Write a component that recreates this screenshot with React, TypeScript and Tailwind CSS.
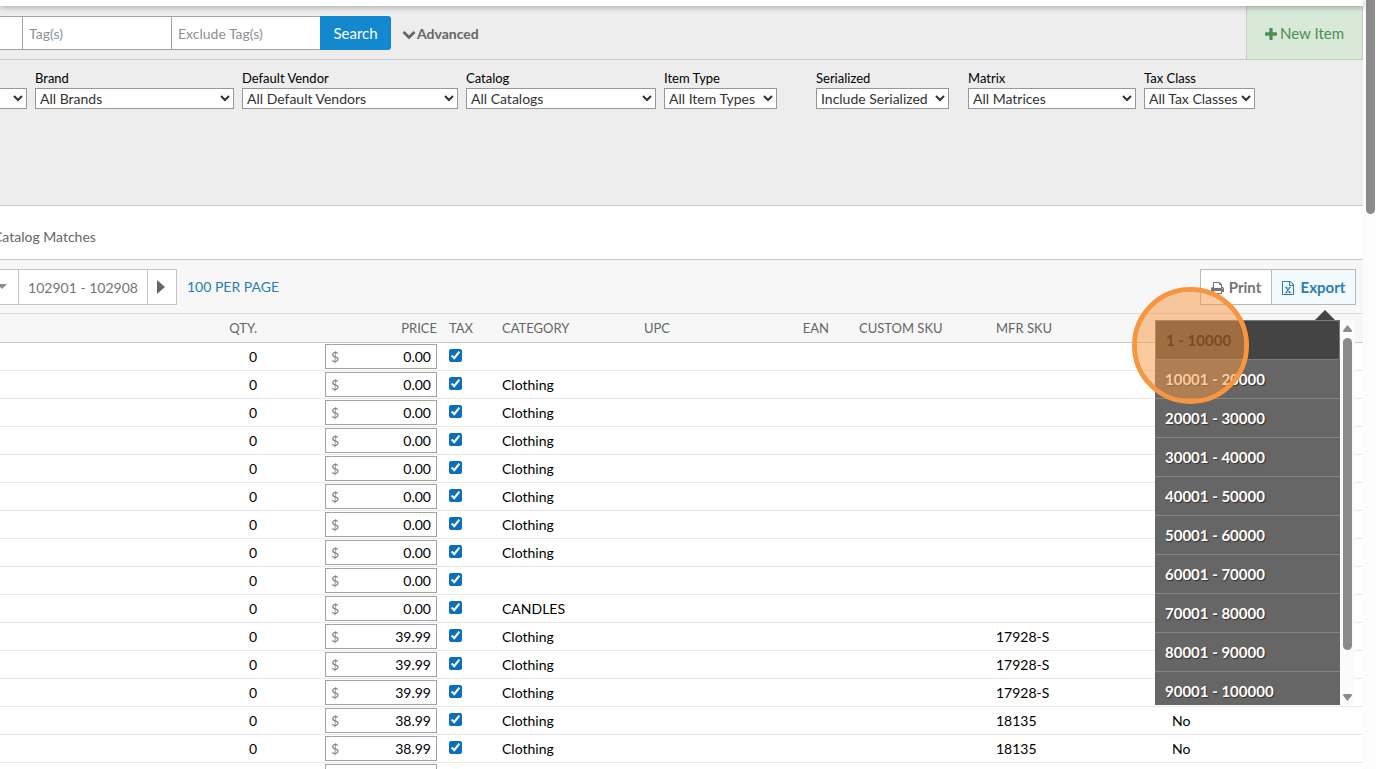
import { useState } from "react";

type Filter = { id: string; label: string; value: string; className: string };
type Item = { price: string; category: string; mfrSku: string; archived: string };

const filters: Filter[] = [
  { id: "brand", label: "Brand", value: "All Brands", className: "w-[199px] mr-2" },
  { id: "vendor", label: "Default Vendor", value: "All Default Vendors", className: "w-[216px] mr-2" },
  { id: "catalog", label: "Catalog", value: "All Catalogs", className: "w-[190px] mr-2" },
  { id: "type", label: "Item Type", value: "All Item Types", className: "w-[113px] mr-[39px]" },
  { id: "serialized", label: "Serialized", value: "Include Serialized", className: "w-[133px] mr-[19px]" },
  { id: "matrix", label: "Matrix", value: "All Matrices", className: "w-[168px] mr-2" },
  { id: "tax", label: "Tax Class", value: "All Tax Classes", className: "w-[111px]" },
];

const items: Item[] = [
  { price: "0.00", category: "", mfrSku: "", archived: "" },
  { price: "0.00", category: "Clothing", mfrSku: "", archived: "" },
  { price: "0.00", category: "Clothing", mfrSku: "", archived: "" },
  { price: "0.00", category: "Clothing", mfrSku: "", archived: "" },
  { price: "0.00", category: "Clothing", mfrSku: "", archived: "" },
  { price: "0.00", category: "Clothing", mfrSku: "", archived: "" },
  { price: "0.00", category: "Clothing", mfrSku: "", archived: "" },
  { price: "0.00", category: "Clothing", mfrSku: "", archived: "" },
  { price: "0.00", category: "", mfrSku: "", archived: "" },
  { price: "0.00", category: "CANDLES", mfrSku: "", archived: "" },
  { price: "39.99", category: "Clothing", mfrSku: "17928-S", archived: "" },
  { price: "39.99", category: "Clothing", mfrSku: "17928-S", archived: "" },
  { price: "39.99", category: "Clothing", mfrSku: "17928-S", archived: "" },
  { price: "38.99", category: "Clothing", mfrSku: "18135", archived: "No" },
  { price: "38.99", category: "Clothing", mfrSku: "18135", archived: "No" },
  { price: "38.99", category: "Clothing", mfrSku: "18135", archived: "No" },
];

const exportRanges = [
  "1 - 10000",
  "10001 - 20000",
  "20001 - 30000",
  "30001 - 40000",
  "40001 - 50000",
  "50001 - 60000",
  "60001 - 70000",
  "70001 - 80000",
  "80001 - 90000",
  "90001 - 100000",
];

function ChevronIcon() {
  return (
    <svg viewBox="0 0 1792 1792" className="w-[14px] h-[14px]" fill="currentColor" aria-hidden="true">
      <path d="M1683 808l-742 741q-19 19-45 19t-45-19l-742-741q-19-19-19-45.5t19-45.500l166-165q19-19 45-19t45 19l531 531 531-531q19-19 45-19t45 19l166 165q19 19 19 45.500t-19 45.500z" />
    </svg>
  );
}

function PlusIcon() {
  return (
    <svg viewBox="0 128 1408 1408" className="w-3 h-3" fill="currentColor" aria-hidden="true">
      <path d="M1408 736v192q0 40-28 68t-68 28h-416v416q0 40-28 68t-68 28h-192q-40 0-68-28t-28-68v-416h-416q-40 0-68-28t-28-68v-192q0-40 28-68t68-28h416v-416q0-40 28-68t68-28h192q40 0 68 28t28 68v416h416q40 0 68 28t28 68z" />
    </svg>
  );
}

function PrintIcon() {
  return (
    <svg viewBox="0 0 1664 1792" className="w-[13px] h-[14px]" fill="currentColor" aria-hidden="true">
      <path d="M384 1536h896v-256h-896v256zM384 896h896v-384h-160q-40 0-68-28t-28-68v-160h-640v640zM1536 960q0-26-19-45t-45-19-45 19-19 45 19 45 45 19 45-19 19-45zM1664 960v416q0 13-9.500 22.500t-22.500 9.500h-224v160q0 40-28 68t-68 28h-960q-40 0-68-28t-28-68v-160h-224q-13 0-22.500-9.500t-9.500-22.500v-416q0-79 56.500-135.500t135.500-56.500h64v-544q0-40 28-68t68-28h672q40 0 88 20t76 48l152 152q28 28 48 76t20 88v256h64q79 0 135.500 56.500t56.500 135.500z" />
    </svg>
  );
}

function ExcelIcon() {
  return (
    <svg viewBox="0 0 1536 1792" className="w-3 h-[14px]" fill="currentColor" aria-hidden="true">
      <path d="M1468 380q28 28 48 76t20 88v1152q0 40-28 68t-68 28h-1344q-40 0-68-28t-28-68v-1600q0-40 28-68t68-28h896q40 0 88 20t76 48zM1024 136v376h376q-10-29-22-41l-313-313q-12-12-41-22zM1408 1664v-1024h-416q-40 0-68-28t-28-68v-416h-768v1536h1280z" />
      <path
        d="M520 840L1010 1470M1010 840L520 1470M420 820h270M860 820h250M420 1490h260M850 1490h270"
        fill="none"
        stroke="currentColor"
        strokeWidth="150"
      />
    </svg>
  );
}

function ExportMenu() {
  return (
    <div className="absolute top-[50px] right-0 z-10 w-[200px] h-[385px] flex">
      <svg viewBox="0 0 20 10" className="absolute -top-[10px] left-[160px] w-5 h-[10px]" aria-hidden="true">
        <path d="M0 10L10 0L20 10Z" fill="#444444" />
      </svg>
      <div className="w-[185px] h-full overflow-hidden bg-[#666666]">
        {exportRanges.map((range, i) => (
          <button
            key={range}
            type="button"
            className={
              i === 0
                ? "block w-full h-10 pt-[2px] pl-[10px] text-left text-[15px] font-bold text-black bg-[#444444] border border-[#7c7c7c] rounded-[3px]"
                : "block w-full h-[39px] pt-[2px] pl-[10px] text-left text-[15px] font-bold text-white border-b border-[#858585] [text-shadow:1px_1px_1px_#333333]"
            }
          >
            {range}
          </button>
        ))}
      </div>
      <div className="flex-1 flex flex-col items-center bg-[#fbfbfb] pt-[5px] pb-1">
        <svg viewBox="0 0 9 7" className="w-[9px] h-[7px]" fill="#8b8b8b" aria-hidden="true">
          <path d="M4.500 0L9 5.500Q9 7 8 7H1Q0 7 0 5.500Z" />
        </svg>
        <div className="w-[9px] h-[312px] mt-[6px] mb-auto rounded-full bg-[#8b8b8b]" />
        <svg viewBox="0 0 9 7" className="w-[9px] h-[7px]" fill="#8b8b8b" aria-hidden="true">
          <path d="M4.500 7L9 1.500Q9 0 8 0H1Q0 0 0 1.500Z" />
        </svg>
      </div>
      <div className="absolute -top-[33px] -left-[23px] w-[117px] h-[117px] rounded-full border-5 border-[#f79540] bg-[#f79540]/50 bg-clip-padding pointer-events-none" />
    </div>
  );
}

export default function App() {
  const [taxed, setTaxed] = useState<boolean[]>(items.map(() => true));

  function toggleTax(index: number) {
    setTaxed(taxed.map((t, i) => (i === index ? !t : t)));
  }

  return (
    <div className="flex h-screen overflow-hidden bg-white font-[Lato,sans-serif] text-sm text-black">
      <main className="flex-1 min-w-0">
        <div className="relative h-[6px] bg-white shadow-[0_1px_6px_rgba(0,0,0,0.35)]" />

        <form
          className="flex items-center h-[54px] bg-[#ededed] border-b border-[#c8c8c8]"
          onSubmit={(e) => e.preventDefault()}
        >
          <input
            type="text"
            aria-label="Search items"
            className="w-[22px] h-[34px] bg-white border-y border-[#a3a3a3]"
          />
          <input
            type="text"
            aria-label="Tags"
            placeholder="Tag(s)"
            className="w-[150px] h-[34px] px-[6px] pt-[2px] bg-white border border-[#a3a3a3] placeholder:text-[#8c9196]"
          />
          <input
            type="text"
            aria-label="Exclude tags"
            placeholder="Exclude Tag(s)"
            className="w-[149px] h-[34px] px-[6px] pt-[2px] bg-white border-y border-[#a3a3a3] placeholder:text-[#8c9196]"
          />
          <button
            type="submit"
            className="w-[71px] h-[34px] -ml-px pt-[2px] rounded-r-[3px] bg-[#1388cf] text-[15px] text-white"
          >
            Search
          </button>
          <button type="button" className="flex items-center gap-px ml-[11px] pt-[2px] font-bold text-[#666666]">
            <ChevronIcon />
            Advanced
          </button>
          <button
            type="button"
            className="flex items-center justify-center gap-[3px] w-[117px] h-full ml-auto pt-[2px] border-x border-[#c3cfc3] bg-[#d8ead7] text-[15px] text-[#4a8f54]"
          >
            <PlusIcon />
            New Item
          </button>
        </form>

        <div className="flex items-start h-[146px] pt-2 bg-[#ededed] border-b border-[#c8c8c8]">
          <select
            aria-label="Category"
            className="w-[27px] h-[21px] mt-5 mr-2 bg-white border border-l-0 border-[#979797] text-[#333333]"
          />
          {filters.map((f) => (
            <div key={f.id} className={f.className}>
              <label htmlFor={f.id} className="block h-5 leading-5 text-[13px]">
                {f.label}
              </label>
              <select
                id={f.id}
                className="block w-full h-[21px] bg-white border border-[#979797] text-sm text-[#333333]"
              >
                <option>{f.value}</option>
              </select>
            </div>
          ))}
        </div>

        <div className="flex items-center h-[54px] pt-2 border-b border-[#c8c8c8]">
          <a href="#catalog" className="-ml-[7px] text-[#666666]">
            Catalog Matches
          </a>
        </div>

        <div className="flex items-center h-[54px] pr-[7px] bg-[#f7f7f7] border-b border-[#dddddd]">
          <div className="flex h-9 border border-l-0 border-[#c5c5c5] bg-white text-[#757575]">
            <button type="button" aria-label="Jump to page" className="w-[18px]">
              <svg viewBox="0 0 10 5" className="w-[10px] h-[5px] -ml-[3px]" fill="#8c8c8c" aria-hidden="true">
                <path d="M0 0H10L5 5Z" />
              </svg>
            </button>
            <span className="w-[130px] border-x border-[#c5c5c5] text-center leading-9">
              102901 - 102908
            </span>
            <button type="button" aria-label="Next page" className="flex items-center w-7 pl-[9px]">
              <svg viewBox="0 0 8 14" className="w-2 h-[14px]" fill="#666666" aria-hidden="true">
                <path d="M0 0L8 7L0 14Z" />
              </svg>
            </button>
          </div>
          <button type="button" className="ml-[10px] text-[#2a7db8]">
            100 PER PAGE
          </button>
          <div className="relative flex h-9 ml-auto border border-[#b9b9b9] bg-white font-bold text-[15px]">
            <button
              type="button"
              className="flex items-center justify-center gap-[5px] w-[70px] pt-[2px] text-[#757575]"
            >
              <PrintIcon />
              Print
            </button>
            <button
              type="button"
              className="flex items-center justify-center gap-[7px] w-[84px] pt-[2px] border-l border-[#b9b9b9] bg-[#f3fafe] text-[#2a7db8]"
            >
              <ExcelIcon />
              Export
            </button>
            <ExportMenu />
          </div>
        </div>

        <table className="w-full table-fixed border-separate border-spacing-0">
          <colgroup>
            <col className="w-[265px]" />
            <col className="w-[180px]" />
            <col className="w-[49px]" />
            <col className="w-[142px]" />
            <col className="w-[107px]" />
            <col className="w-[94px]" />
            <col className="w-[151px]" />
            <col className="w-[176px]" />
            <col />
          </colgroup>
          <thead>
            <tr className="h-[29px] bg-[#f7f7f7] text-left text-[13px] text-[#666666] [&>th]:border-b [&>th]:border-[#c8c8c8] [&>th]:font-normal [&>th]:py-0">
              <th className="px-2 text-right">QTY.</th>
              <th className="px-2 text-right">PRICE</th>
              <th className="px-1">TAX</th>
              <th className="px-2">CATEGORY</th>
              <th className="px-2">UPC</th>
              <th className="px-2 text-right">EAN</th>
              <th className="pl-[22px]">CUSTOM SKU</th>
              <th className="px-2">MFR SKU</th>
              <th />
            </tr>
          </thead>
          <tbody>
            {items.map((item, i) => (
              <tr key={i} className="h-7 [&>td]:border-b [&>td]:border-[#e9e9e9] [&>td]:py-0">
                <td className="px-2 text-right">0</td>
                <td className="px-2">
                  <label className="flex items-center w-[112px] h-[25px] ml-auto px-[5px] bg-white border border-[#a3a3a3] text-[#808080]">
                    $
                    <input
                      type="text"
                      aria-label="Price"
                      defaultValue={item.price}
                      className="flex-1 min-w-0 text-right text-black"
                    />
                  </label>
                </td>
                <td className="px-1">
                  <input
                    type="checkbox"
                    aria-label="Tax"
                    checked={taxed[i]}
                    onChange={() => toggleTax(i)}
                    className="block w-[13px] h-[13px] mb-[2px] accent-[#0a6fbf]"
                  />
                </td>
                <td className="px-2">{item.category}</td>
                <td />
                <td />
                <td />
                <td className="px-2">{item.mfrSku}</td>
                <td className="px-2">{item.archived}</td>
              </tr>
            ))}
          </tbody>
        </table>
      </main>

      <div className="w-[13px] pl-[3px] bg-[#fcfcfc]">
        <div className="w-[9px] h-[214px] rounded-b-full bg-[#8b8b8b]" />
      </div>
    </div>
  );
}
